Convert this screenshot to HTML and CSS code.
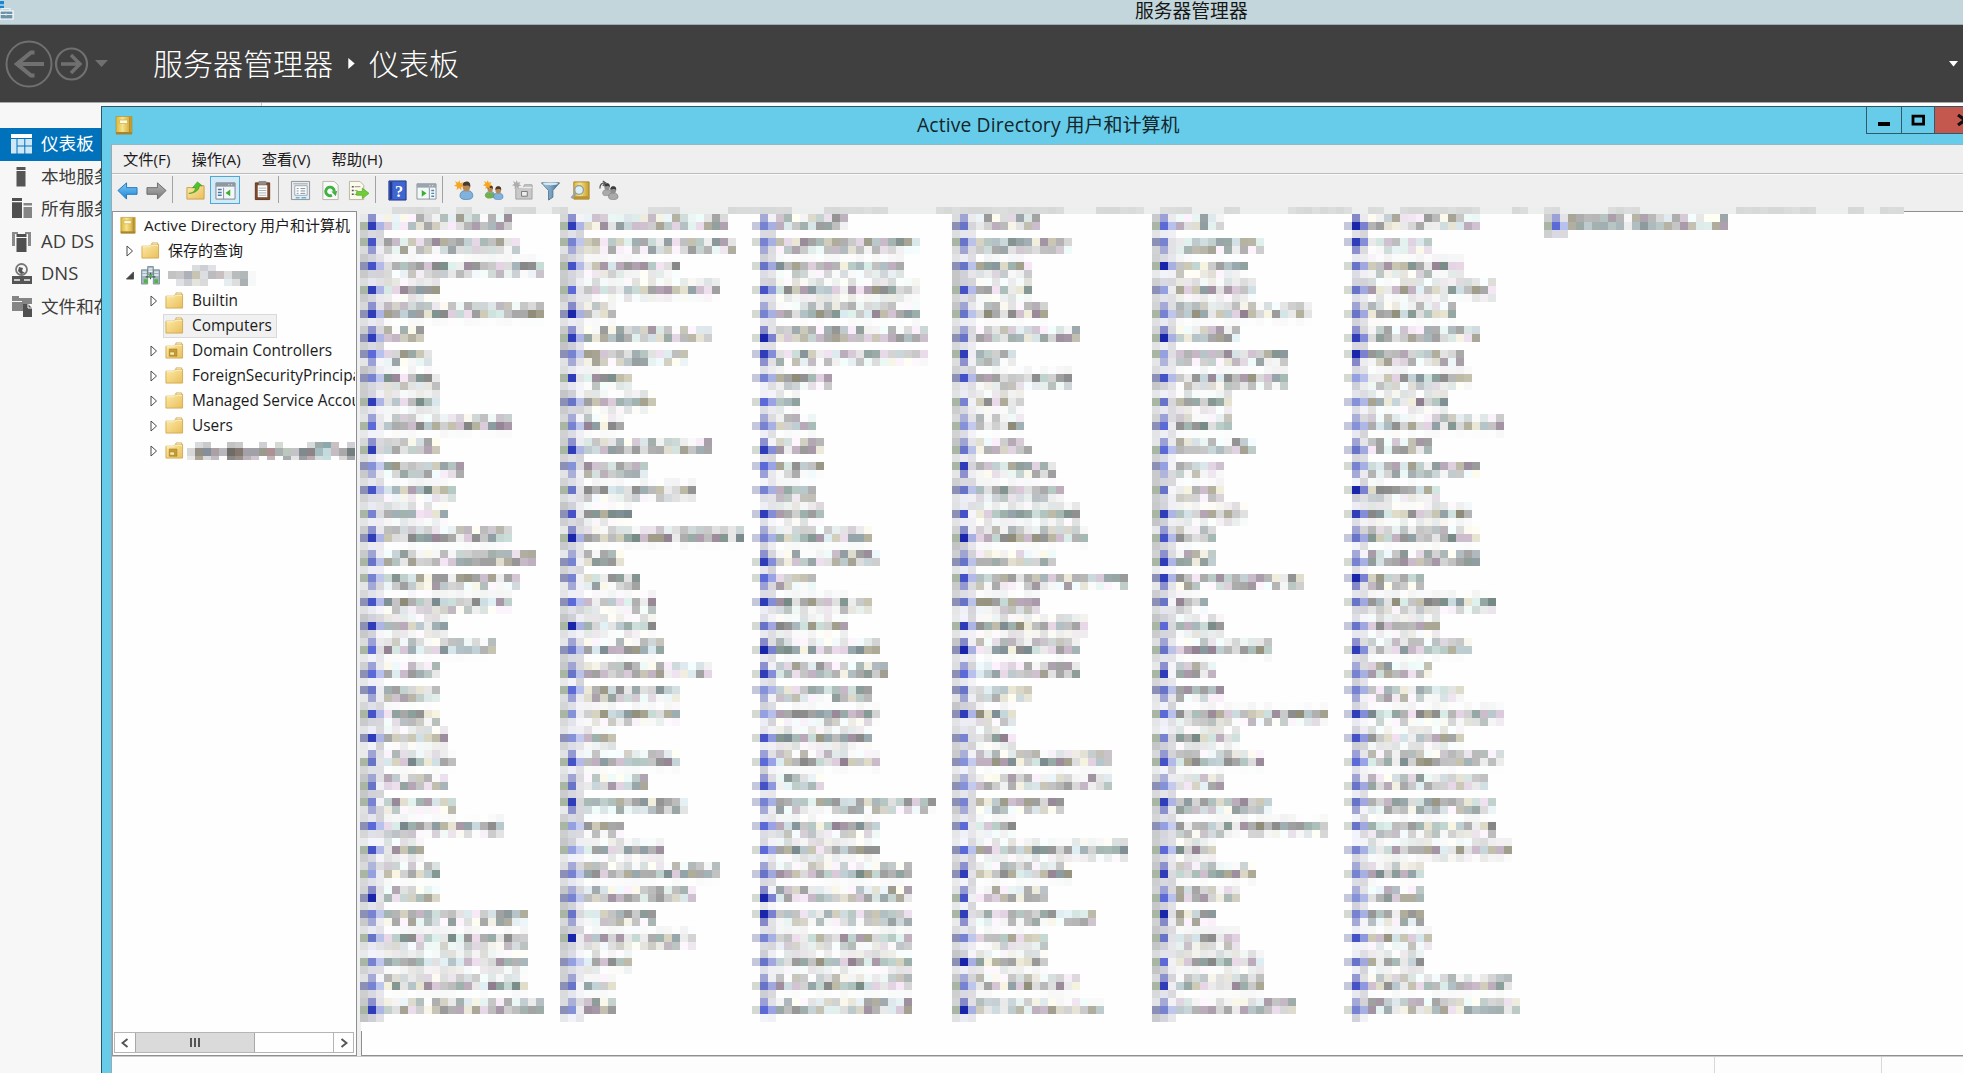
FILE: index.html
```html
<!DOCTYPE html>
<html lang="zh-CN">
<head>
<meta charset="utf-8">
<title>服务器管理器</title>
<link rel="stylesheet" href="styles.css">
</head>
<body>
<svg width="0" height="0" class="defs">
  <defs>
    <linearGradient id="gold" x1="0" y1="0" x2="1" y2="1"><stop offset="0" stop-color="#fdeaa6"/><stop offset="1" stop-color="#e9bf5c"/></linearGradient>
    <linearGradient id="book" x1="0" y1="0" x2="1" y2="0"><stop offset="0" stop-color="#d9b63c"/><stop offset=".4" stop-color="#f6e38a"/><stop offset="1" stop-color="#c79b2a"/></linearGradient>
    <linearGradient id="blue" x1="0" y1="0" x2="0" y2="1"><stop offset="0" stop-color="#7cc8f5"/><stop offset="1" stop-color="#1f86d8"/></linearGradient>
    <linearGradient id="grey" x1="0" y1="0" x2="0" y2="1"><stop offset="0" stop-color="#b5b5b5"/><stop offset="1" stop-color="#7a7a7a"/></linearGradient>
    <linearGradient id="fun" x1="0" y1="0" x2="1" y2="0"><stop offset="0" stop-color="#a8cbe2"/><stop offset=".5" stop-color="#7ba4c2"/><stop offset="1" stop-color="#3d6a90"/></linearGradient>
    <symbol id="i-book" viewBox="0 0 20 20"><path d="M2 1h16v17H2z" fill="url(#book)" stroke="#b08d2c" stroke-width=".6"/><path d="M2 16.500h16v2.500H2z" fill="#a8842a"/><path d="M5.500 4.500h8v3.500h-8z" fill="#fffbe0" stroke="#cfae44" stroke-width=".7"/><path d="M15.800 1.500v15" stroke="#a9852b" stroke-width="1"/></symbol>
    <symbol id="i-folder" viewBox="0 0 20 18"><path d="M1 4.500h8l2-2h7.500V17H1z" fill="url(#gold)" stroke="#cfa64a" stroke-width=".9"/><path d="M11.500 1h6v2h-6z" fill="#fff3c8" stroke="#c9a24a" stroke-width=".8"/><path d="M1.500 5h7.600l2-1.500H18" fill="none" stroke="#fff5cf" stroke-width="1"/></symbol>
    <symbol id="i-ou" viewBox="0 0 20 18"><use href="#i-folder"/><path d="M4.500 7.500h8v7.500h-8z" fill="#c89c34" stroke="#9a7826" stroke-width=".6"/><path d="M5 10.500h5v3.500H5z" fill="#fbe9a0" stroke="#9a7826" stroke-width=".6"/></symbol>
    <symbol id="i-domain" viewBox="0 0 20 20"><g fill="#a3b4bf" stroke="#6d808c" stroke-width=".8"><path d="M7 .500h6v9H7zM.500 4H7v15H.500zM13 4h6.500v15H13z"/></g><path d="M8 3h4M8 5.500h4M1.500 6.500h4.500M1.500 9.500h4.500M14 6.500h4.500M14 9.500h4.500" stroke="#eef5f8" stroke-width="1.400"/><path d="M5 11.500h10M10 7v7" stroke="#3d5260" stroke-width="1.200"/><path d="M3 14h4v4H3zM14 14h4v4h-4zM8.500 9h3v3h-3z" fill="#4fb83c"/></symbol>
    <symbol id="i-user" viewBox="0 0 14 18"><path d="M1 14c0-4 3-5 6-5s6 1 6 5c0 3-3 3.500-6 3.500S1 17 1 14z" fill="#7fb2dd" stroke="#4d7fac" stroke-width=".7"/><ellipse cx="7" cy="5.500" rx="3.600" ry="4.500" fill="#b98857"/><path d="M3.400 5C3 1 6 .5 7.500.500S11.500 2 10.500 6C10 3.500 6 4 3.400 5z" fill="#4a3a2c"/></symbol>
    <symbol id="i-star" viewBox="0 0 10 10"><path d="M5 0l1 3 3-1-1.500 2.500L10 6 7 6.600 7 10 5 7.500 2.500 9.500 3 6.500 0 5.500 2.500 4 1 1l3 1.500z" fill="#f5a623"/></symbol>
  </defs>
</svg>

<div class="screen">
  <div class="manager-title">
    <svg class="manager-icon" width="15" height="20" viewBox="0 0 15 20"><path d="M0 1h4v7H0z" fill="#1c86d1"/><path d="M0 5h4" stroke="#fff"/><path d="M0 11h13v8H0z" fill="#6d93a8" stroke="#fff" stroke-width="1.200"/><path d="M2 11V8.500h8V11M0 14.500h13M6 13.500v2" fill="none" stroke="#e9f1f4" stroke-width="1.200"/></svg>
    <span class="manager-name">服务器管理器</span>
  </div>
  <header class="manager-head">
    <svg class="head-nav" width="112" height="50" viewBox="0 0 112 50" fill="none" stroke="#707070">
      <circle cx="29" cy="25" r="22.500" stroke-width="2"/><path d="M44 25H18M34.500 13.500h-3.500L17 25l14 11.500h3.500" stroke-width="4.200"/>
      <circle cx="71.500" cy="25" r="15.500" stroke-width="2.200"/><path d="M61 25h18M71 16l9 9-9 9" stroke-width="3.400"/>
      <path d="M95 21h13l-6.500 7z" fill="#707070" stroke="none"/>
    </svg>
    <h1 class="crumbs"><span>服务器管理器</span><svg class="crumb-arrow" width="7" height="11" viewBox="0 0 7 12"><path d="M0 0l7 6-7 6z" fill="#fff"/></svg><span>仪表板</span></h1>
    <svg class="head-menu" width="9" height="6" viewBox="0 0 9 6"><path d="M0 0h9L4.500 5.500z" fill="#fff"/></svg>
  </header>
  <div class="manager-body">
    <nav class="side">
      <div class="side-item active"><svg width="22" height="22" viewBox="0 0 22 22" fill="#cfe6f5"><path fill="#fff" d="M0 1h21v4H0z"/><path d="M0 6h5.500v14.500H0zM6.500 6h6.800v6.500H6.500zM14.300 6H21v6.500h-6.700zM6.500 13.500h6.800v7H6.500zM14.300 13.500H21v7h-6.700z"/></svg><span>仪表板</span></div>
      <div class="side-item"><svg width="22" height="22" viewBox="0 0 22 22" fill="#555"><path d="M5.500 1h9v3h-9zM5.500 5h9v15.500h-9z"/></svg><span>本地服务器</span></div>
      <div class="side-item"><svg width="22" height="22" viewBox="0 0 22 22" fill="#505050"><path d="M1 0h10v3H1zM1 4.200h10V20H1z"/><path fill="#858585" d="M12.500 5h8.500v2.500h-8.500zM12.500 9H21v11h-8.500z"/></svg><span>所有服务器</span></div>
      <div class="side-item latin"><svg width="22" height="22" viewBox="0 0 22 22" fill="#505050"><path fill="#8a8a8a" d="M1 1h6v2H4v12H1zM20 1h-6v2h3v12h3z"/><path d="M5.500 3h10v3h-10zM5.500 7h10v14h-10z"/></svg><span>AD DS</span></div>
      <div class="side-item latin"><svg width="22" height="22" viewBox="0 0 22 22" fill="#555"><circle cx="10.500" cy="6.500" r="5.500" fill="none" stroke="#777" stroke-width="1.800"/><path d="M8 4l4 1-1 3 3 2-4 1-3-3z"/><path d="M1 13h20v8H1z"/><path d="M3 17h6M13 17h6" stroke="#eee" stroke-width="1.600"/></svg><span>DNS</span></div>
      <div class="side-item"><svg width="22" height="22" viewBox="0 0 22 22" fill="#858585"><path d="M1 0h7v2h4v3H1zM1 6h11v9H1z" /><path d="M11 2h10v6H11z"/><path fill="#505050" d="M12 8h5l4 4v9h-9z"/><path d="M17 8v4h4" fill="none" stroke="#f7f7f7"/></svg><span>文件和存储服务</span></div>
    </nav>
    <div class="manager-main"></div>
  </div>

  <section class="window">
    <div class="caption">
      <svg class="caption-icon" width="20" height="21"><use href="#i-book"/></svg>
      <span class="caption-text"><i>Active Directory</i> 用户和计算机</span>
      <div class="caption-buttons">
        <b class="min"><svg width="14" height="12" viewBox="0 0 14 12"><path d="M1 8h12v4H1z"/></svg></b>
        <b class="max"><svg width="14" height="12" viewBox="0 0 14 12"><path d="M2 2.200h10.600v8H2z" fill="none" stroke="#000" stroke-width="2.800"/></svg></b>
        <b class="close"><svg width="16" height="12" viewBox="0 0 16 12"><path d="M1 1l14 10M15 1L1 11" stroke="#111" stroke-width="3.200"/></svg></b>
      </div>
    </div>
    <div class="client">
      <div class="menu"><span>文件(F)</span><span>操作(A)</span><span>查看(V)</span><span>帮助(H)</span></div>
      <div class="toolbar">
        <svg viewBox="0 0 22 22"><path d="M1 11L10 3v5h11v7H10v5z" fill="url(#blue)" stroke="#2376b8"/></svg>
        <svg viewBox="0 0 22 22"><path d="M21 11L12 3v5H1v7h11v5z" fill="url(#grey)" stroke="#6b6b6b"/></svg>
        <i class="sep"></i>
        <svg viewBox="0 0 22 22"><path d="M2 8h8l2-2h8v14H2z" fill="url(#gold)" stroke="#c9a04a"/><path d="M4 14c4 0 7-3 7-6H8l5-6 5 4h-3c0 5-5 8-11 8z" fill="#54c22f" stroke="#2f8f1a" stroke-width=".6"/></svg>
        <i class="pressed"><svg viewBox="0 0 22 22"><path d="M1 3h20v17H1z" fill="#f4f7f9" stroke="#77838d"/><path d="M1 3h20v4H1z" fill="#8c98a2"/><path d="M14 5h1M17 5h1" stroke="#fff"/><path d="M3 10h4M3 13h4M3 16h4" stroke="#4b7ba5" stroke-width="1.500"/><path d="M9 8v12" stroke="#8593a0"/><path d="M16 10v7l-5-3.500z" fill="#3bb02c"/></svg></i>
        <svg viewBox="0 0 22 22"><path d="M3.500 3h15v17.500h-15z" fill="#7c4a2b" stroke="#5d3620"/><path d="M6 5.500h10V18H6z" fill="#fbfbfb"/><path d="M7 1h8v4H7z" fill="#8d8d8d"/><path d="M7 8.500h8M7 11h8M7 13.500h8M7 16h8" stroke="#a9b1b8"/></svg>
        <i class="sep"></i>
        <svg viewBox="0 0 22 22"><path d="M1.500 1.500h19v19h-19z" fill="#e9ecee" stroke="#8b9196"/><path d="M3.500 4h15" stroke="#9aa3aa"/><path d="M5 6h13v10H5z" fill="#fff" stroke="#9aa5ae"/><path d="M7 9h2M11 9h5M7 11.500h2M11 11.500h5M7 14h2M11 14h5" stroke="#7d8d99"/><path d="M6 18.500h4M12 18.500h5" stroke="#58b9dd" stroke-width="1.500"/></svg>
        <svg viewBox="0 0 22 22"><path d="M3 1.500h12l4 4v15H3z" fill="#fafafa" stroke="#b5b5a8"/><path d="M15 12a4.500 4.500 0 1 0-2.500 4" fill="none" stroke="#3fb13f" stroke-width="3"/><path d="M18 11.500l-6 .5 4.500 5z" fill="#3fb13f"/></svg>
        <svg viewBox="0 0 22 22"><path d="M1.500 1.500h11l4 4v15h-15z" fill="#fcfaea" stroke="#b5b5a0"/><path d="M4 7h2M4 11h2M4 15h2" stroke="#555" stroke-width="1.500"/><path d="M7 7h6M7 11h3M7 15h3" stroke="#a8a890" stroke-width="1.300"/><path d="M9 12h6V8.500l7 5.500-7 5.500V16H9z" fill="#6fce36" stroke="#4da71f" stroke-width=".7"/></svg>
        <i class="sep"></i>
        <svg viewBox="0 0 22 22"><path d="M2 1h18v20H2z" fill="#3f66d0" stroke="#1f3483"/><path d="M3 2h2.500v18H3z" fill="#22378f"/><text x="12.500" y="17.500" text-anchor="middle" class="help">?</text></svg>
        <svg viewBox="0 0 22 22"><path d="M1 4h20v16H1z" fill="#f4f7f9" stroke="#8a949b"/><path d="M1 4h20v4H1z" fill="#9aa4ac"/><path d="M14 6h1M17 6h1" stroke="#fff"/><path d="M14 8v12" stroke="#8593a0"/><path d="M16 11h3M16 14h3M16 17h3" stroke="#5485b0" stroke-width="1.400"/><path d="M6 10.500v7l5-3.500z" fill="#3bb02c"/></svg>
        <i class="sep"></i>
        <svg viewBox="0 0 22 22"><use href="#i-user" x="5" y="1" width="16" height="20"/><use href="#i-star" x="0" y="0" width="11" height="11"/></svg>
        <svg viewBox="0 0 22 22"><use href="#i-user" x="2" y="5" width="11" height="14"/><path d="M2 16c0-2 2-3 5-3s5 1 5 3-2 3.500-5 3.500S2 18.500 2 16z" fill="#74b04a"/><use href="#i-user" x="10" y="6" width="12" height="15"/><use href="#i-star" x="0" y="0" width="10" height="10"/></svg>
        <svg viewBox="0 0 22 22"><path d="M4 8h8l1-3h8v15H4z" fill="#c9c9c9" stroke="#a2a2a2"/><path d="M4 8h17" stroke="#f2f2f2"/><path d="M10 12h6v5h-6z" fill="#eee" stroke="#777"/><use href="#i-star" x="0" y="0" width="10" height="10" class="mono"/></svg>
        <svg viewBox="0 0 22 22"><path d="M1.500 3h19l-7 8v7l-4.500 3V11z" fill="url(#fun)" stroke="#54788f"/><ellipse cx="11" cy="4" rx="8" ry="1.500" fill="#d8e8f2"/></svg>
        <svg viewBox="0 0 22 22"><path d="M4 2h16v18H4z" fill="url(#book)" stroke="#a9852b"/><path d="M4 17h16v3H4z" fill="#b8932f"/><circle cx="9.500" cy="10.500" r="4.500" fill="#dceef7" stroke="#8c9ba5" stroke-width="1.300"/><path d="M6 14l-4.500 5" stroke="#9aa3aa" stroke-width="2.400"/></svg>
        <svg viewBox="0 0 22 22" class="mono"><use href="#i-user" x="4" y="3" width="11" height="14"/><use href="#i-user" x="10" y="6" width="12" height="15"/><path d="M2 9c0-5 2-6 5-6M5 1l3 2-3 3" fill="none" stroke="#555" stroke-width="1.300"/></svg>
      </div>
      <div class="panes">
        <div class="tree">
          <div class="rows">
            <div class="row root"><svg class="ico" width="20" height="21"><use href="#i-book"/></svg><span><i>Active Directory</i> 用户和计算机</span></div>
            <div class="row l1"><svg class="tw" viewBox="0 0 8 12"><path d="M1 1l5.500 5L1 11z"/></svg><svg class="ico"><use href="#i-folder"/></svg><span class="cjk">保存的查询</span></div>
            <div class="row l1"><svg class="tw open" viewBox="0 0 9 10"><path d="M8.500 1v8H.500z"/></svg><svg class="ico"><use href="#i-domain"/></svg><canvas class="domain-name" width="88" height="21"></canvas></div>
            <div class="row l2"><svg class="tw" viewBox="0 0 8 12"><path d="M1 1l5.500 5L1 11z"/></svg><svg class="ico"><use href="#i-folder"/></svg><span>Builtin</span></div>
            <div class="row l2"><svg class="tw"></svg><div class="selected"><svg class="ico"><use href="#i-folder"/></svg><span>Computers</span></div></div>
            <div class="row l2"><svg class="tw" viewBox="0 0 8 12"><path d="M1 1l5.500 5L1 11z"/></svg><svg class="ico"><use href="#i-ou"/></svg><span>Domain Controllers</span></div>
            <div class="row l2"><svg class="tw" viewBox="0 0 8 12"><path d="M1 1l5.500 5L1 11z"/></svg><svg class="ico"><use href="#i-folder"/></svg><span>ForeignSecurityPrincipals</span></div>
            <div class="row l2"><svg class="tw" viewBox="0 0 8 12"><path d="M1 1l5.500 5L1 11z"/></svg><svg class="ico"><use href="#i-folder"/></svg><span>Managed Service Accounts</span></div>
            <div class="row l2"><svg class="tw" viewBox="0 0 8 12"><path d="M1 1l5.500 5L1 11z"/></svg><svg class="ico"><use href="#i-folder"/></svg><span>Users</span></div>
            <div class="row l2"><svg class="tw" viewBox="0 0 8 12"><path d="M1 1l5.500 5L1 11z"/></svg><svg class="ico"><use href="#i-ou"/></svg><canvas class="unit-name" width="169" height="18"></canvas></div>
          </div>
          <div class="hscroll">
            <b><svg width="8" height="10" viewBox="0 0 8 10"><path d="M6.500 1l-5 4 5 4"/></svg></b>
            <div class="thumb"><i></i><i></i><i></i></div>
            <div class="track"></div>
            <b><svg width="8" height="10" viewBox="0 0 8 10"><path d="M1.500 1l5 4-5 4"/></svg></b>
          </div>
        </div>
        <div class="list"><canvas class="mosaic" width="1544" height="824"></canvas></div>
      </div>
      <div class="status"><span></span><span></span><span></span></div>
    </div>
  </section>
</div>
<script src="mosaic.js"></script>
</body>
</html>
```
FILE: styles.css
```css
* { box-sizing: border-box; }
body { margin: 0; overflow: hidden; background: #f7f7f7; color: #1b1b1b; font-family: "Open Sans", "Noto Sans CJK SC", sans-serif; }
i, b { font-style: normal; font-weight: normal; }
svg { display: block; flex: none; }
.defs { position: absolute; }
.screen { position: relative; width: 1963px; height: 1073px; overflow: hidden; display: flex; flex-direction: column; }

.manager-title { height: 25px; flex: none; display: flex; align-items: flex-start; background: #c3d6dc; border-bottom: 1px solid #9fabae; }
.manager-name { margin-left: 1120px; font-size: 18.800px; line-height: 22px; white-space: nowrap; color: #161616; }
.manager-head { height: 78px; flex: none; display: flex; align-items: center; background: #404040; border-bottom: 1px solid #a9a9a9; }
.crumbs { display: flex; align-items: center; margin: 0 0 0 41px; font-size: 30px; line-height: 40px; font-weight: 300; color: #fff; white-space: nowrap; }
.crumb-arrow { margin: 0 14px 0 15px; }
.head-menu { margin: 0 5px 0 auto; }
.manager-body { flex: 1; display: flex; }
.side { width: 262px; padding-top: 25px; border-right: 1px solid #c8c8c8; background: #f7f7f7; }
.manager-main { flex: 1; background: #fff; }
.side-item { height: 32.500px; display: flex; align-items: center; padding-left: 11px; gap: 8px; font-size: 17.600px; color: #3c3c3c; white-space: nowrap; }
.side-item span { line-height: 28px; padding-bottom: 2px; }
.side-item.latin { font-size: 18.400px; }
.side-item.active { background: #0072bc; color: #fff; }

.window { position: absolute; left: 101px; top: 106px; width: 1900px; height: 1000px; padding-left: 9px; border: 1px solid #2c5666; background: #66cce9; display: flex; flex-direction: column; }
.caption { height: 37px; flex: none; display: flex; width: 1862px; }
.caption-icon { margin: 8px 0 0 3px; }
.caption-text { margin-left: 783px; font-size: 19px; line-height: 36px; white-space: pre; color: #14252b; }
.caption-text i { font-size: 19.300px; letter-spacing: .14px; }
.caption-buttons { display: flex; margin-left: auto; height: 27px; width: 107px; overflow: hidden; }
.caption-buttons b { flex: none; height: 27px; border: 1px solid #2f5a68; border-top: 0; margin-right: -1px; display: flex; align-items: center; justify-content: center; }
.min { width: 36px; }
.max { width: 34px; }
.close { width: 62px; background: #c5584e; }

.client { flex: 1; display: flex; flex-direction: column; background: #efefef; border-left: 1px solid #a0a8ab; border-top: 1px solid #8fb9c6; }
.menu { height: 29px; flex: none; display: flex; gap: 21px; padding-left: 11px; border-bottom: 1px solid #bcbcbc; font-size: 15.300px; line-height: 28px; white-space: nowrap; }
.toolbar { height: 37px; flex: none; border-top: 1px solid #fafafa; padding-left: 5px; display: grid; grid-template-columns: 29px 26px 13px 25px 42px 26px 12px 30px 28px 27px 12px 29px 26px 12px 29px 29px 28px 30px 28px 22px; align-items: start; }
.toolbar > svg { width: 21px; height: 21px; margin-top: 5px; }
.sep { width: 1px; height: 27px; background: #a2a2a2; margin-top: 1px; }
.pressed { width: 30px; height: 28px; margin-top: 1px; border: 1px solid #4aa9d6; background: #d3eaf6; display: grid; place-items: center; }
.pressed svg { width: 21px; height: 21px; }
.help { font: bold 17px "Liberation Serif", serif; fill: #fff; }
.mono { filter: grayscale(1); }

.panes { height: 845px; flex: none; display: flex; gap: 4px; }
.tree { width: 245px; background: #fefefe; border: 1px solid #8d9093; border-left-color: #9a9da0; display: flex; flex-direction: column; justify-content: space-between; overflow: hidden; }
.row { height: 25px; display: flex; align-items: center; font-size: 15.400px; white-space: nowrap; width: 242px; overflow: hidden; }
.rows { padding-top: 1px; }
.row span { line-height: 25px; }
.row .cjk { font-size: 15px; }
.row canvas { flex: none; }
.root { padding-left: 6px; font-size: 15px; }
.root i { font-size: 15.300px; }
.root span { margin-left: 7px; }
.l1 { padding-left: 13px; }
.l2 { padding-left: 37px; }
.tw { width: 8px; height: 12px; fill: #fff; stroke: #4a4a4a; stroke-width: 1; }
.tw.open { fill: #444; height: 9px; }
.ico { width: 19px; height: 19px; margin-left: 7px; }
.l1 span, .l1 canvas { margin-left: 8px; }
.l2 span { margin-left: 8px; }
.l2 canvas { margin-left: 3px; }
.root .ico { margin-left: 0; height: 21px; width: 18px; }
.selected { display: flex; align-items: center; height: 24px; margin-left: 5px; padding: 0 4px 0 1px; border: 1px solid #d9d9d9; background: #f1f1f1; }
.selected .ico { margin-left: 0; }
.hscroll { display: flex; height: 21px; margin: 0 2px 2px 1px; border: 1px solid #b5b5b5; }
.hscroll b { width: 20px; display: grid; place-items: center; }
.hscroll b svg { fill: none; stroke: #555; stroke-width: 2; }
.hscroll b:last-child { border-left: 1px solid #b5b5b5; }
.thumb { width: 120px; background: #dadada; border: solid #a8a8a8; border-width: 0 1px; display: flex; align-items: center; justify-content: center; gap: 2px; }
.thumb i { width: 2px; height: 9px; background: #555; }
.track { flex: 1; }
.list { position: relative; flex: 1; background: #fefefe; border: 1px solid #8d9093; }
.mosaic { position: absolute; left: -2px; top: -5px; display: block; }
.status { flex: 1; display: flex; background: #fdfdfd; border-top: 1px solid #c9cccc; }
.status span { flex: none; border-right: 1px solid #d8d8d8; width: 167px; }
.status span:first-child { width: 1603px; }
```
FILE: mosaic.js
```js
// Each list column: first cell, entry widths in cells, and icon darkness per entry.
const columns = [
  { at: 0, blue: 1, wide: 0,
    ends: [19,20,23,10,23,8,9,10,10,19,10,13,12,11,19,22,20,19,11,17,10,10,10,11,12,11,12,18,8,10,10,21,21,21,21,23],
    tone: "877888648683748547866578554672945448" },
  { at: 25, blue: 1, wide: 0,
    ends: [21,22,15,20,7,19,16,9,12,8,19,11,17,9,23,8,10,12,12,13,19,15,15,7,15,11,16,8,13,20,17,12,17,9,7,7],
    tone: "847698485483579446955633758224459253" },
  { at: 50, blue: 0, wide: 1,
    ends: [11,20,18,20,20,21,21,9,5,7,8,8,7,8,14,15,7,14,11,15,16,14,15,14,15,8,22,15,15,19,19,19,19,19,19,19],
    tone: "445749846486484868598327674665994556" },
  { at: 74, blue: 1, wide: 0,
    ends: [11,15,10,10,12,16,8,15,9,9,10,13,14,16,17,13,22,11,17,16,16,10,8,8,20,20,14,8,22,15,12,18,12,12,16,19],
    tone: "555755874358579575896584334668784949" },
  { at: 99, blue: 1, wide: 0,
    ends: [9,14,12,13,20,11,17,17,10,10,13,9,9,12,8,8,19,7,9,15,8,9,22,11,14,9,15,22,8,13,11,8,11,14,14,18],
    tone: "649249275662587885658564738268695684" },
  { at: 124, blue: 0, wide: 1,
    ends: [16,10,14,18,13,16,14,15,12,19,10,16,11,15,16,16,9,18,11,15,10,14,19,14,19,17,18,18,20,9,9,9,10,9,20,21],
    tone: "985558923354985495584487655544347574" },
  { at: 148, blue: 1, wide: 0, ends: [23], tone: "6" }
];
const CELL = 8;

function noise(x, y, k) {
  let h = (x * 374761393 + y * 668265263 + k * 2246822519) | 0;
  h = Math.imul(h ^ (h >>> 13), 1274126177);
  h = Math.imul(h ^ (h >>> 15), 2246822519);
  return ((h ^ (h >>> 16)) >>> 0) / 4294967296;
}
function mix(a, b, t) { return a.map((v, i) => Math.round(v + (b[i] - v) * t)); }
const rgb = c => `rgb(${c.join(",")})`;
const PAPER = [254, 254, 254];

const ctx = document.querySelector(".mosaic").getContext("2d");
function cell(x, y, c) {
  ctx.fillStyle = rgb(c);
  ctx.fillRect(x * CELL, 7 + y * CELL, CELL, CELL);
}

ctx.fillStyle = rgb(PAPER);
ctx.fillRect(1, 7, 1543, 817);
for (let x = 0; x < 193; x++) {
  const v = x > 2 && noise(x >> 1, 3, 9) > .45 ? 214 + Math.floor(noise(x, 1, 2) * 8) : 237;
  ctx.fillStyle = rgb([v, v + 1, v + 1]);
  ctx.fillRect(x * CELL, 0, CELL, 7);
}

const tints = [[0, 0, 0], [10, 6, -12], [-14, 4, 0], [8, -8, 8], [-12, 3, 8], [0, 0, 0]];
for (const col of columns) {
  col.ends.forEach((end, i) => {
    const center = 1 + 2.8 * i;
    const main = Math.floor(center);
    for (let y = Math.max(0, main - 1); y <= Math.min(100, main + 1); y++) {
      const cover = Math.max(0, Math.min(y + 1, center + .85) - Math.max(y, center - .7));
      for (let x = col.blue + 2; x < end; x++) {
        const n = noise(x + col.at, y, 1);
        let ink = cover * (.06 + .42 * n);
        if (cover < .8 && noise(x + col.at, y, 5) < .3) ink *= .15;
        else if (cover > .4 && cover < .8) ink *= 1.25;
        const t = tints[Math.floor(noise(x + col.at, y, 4) * 6)];
        cell(col.at + x, y, mix(PAPER, [0, 0, 0], ink).map((v, k) => Math.min(254, v + t[k] * cover)));
      }
    }
    const d = +col.tone[i];
    const deep = d > 5 ? mix([112, 128, 228], [26, 38, 170], (d - 5) / 4) : mix([178, 190, 240], [104, 116, 200], d / 5);
    const bx = col.at + col.blue;
    for (let y = Math.max(0, main - 1); y <= Math.min(100, main + 1); y++) {
      const g = 205 + Math.floor(noise(bx, y, 7) * 40);
      if (y !== main) {
        cell(bx, y, [g, g, g + 8]);
        if (!col.wide) cell(bx - 1, y, [g - 12, g - 10, g - 8]);
      }
      const r = 210 + Math.floor(noise(bx, y, 8) * 36);
      cell(bx + 1, y, [r, r, r + 5]);
    }
    cell(bx, main, deep);
    const part = center - main;
    if (part > .7 && main < 100) cell(bx, main + 1, mix(deep, [190, 190, 215], .65));
    if (part < .3 && main > 0) cell(bx, main - 1, mix(deep, [190, 190, 215], .65));
    if (noise(bx, main, 2) > .4 || col.wide) cell(bx + 1, main, mix(deep, [215, 220, 245], col.wide ? .5 : .75));
    const edge = noise(bx, main, 3) > .4 ? [170, 182, 164] : [140, 143, 182];
    cell(bx - 1, main, col.wide ? mix(edge, PAPER, .5) : edge);
  });
}

// Short pixelated labels in the tree.
function label(selector, tops, rows) {
  const c = document.querySelector(selector).getContext("2d");
  rows.forEach((row, y) => row.forEach((v, x) => {
    if (!v) return;
    c.fillStyle = "#" + v;
    c.fillRect(x * CELL, tops[y], CELL, tops[y + 1] - tops[y]);
  }));
}
label(".domain-name", [0, 6, 14, 21], [
  [0, 0, 0, "d9dde0", "cccfd6", "dfe1e6", 0, 0, 0, 0, 0],
  ["c3c3c3", "c8c8c8", "aeb0ba", "c8c4b4", "dcdee2", "bcbcc0", "c8bfc0", "dedede", "b8bcbd", "b2b7b8", "f8f8f8"],
  [0, "e0e1e5", "cbced2", "e4e4df", "dadada", 0, 0, "e5edf0", "dddddd", "abb0b3", "f5f8f8"]
]);
label(".unit-name", [0, 6, 14, 18], [
  [0, "d9dadd", "c9cacb", 0, 0, "c2c2c2", "c9c9cb", 0, 0, "cfd0d4", 0, "d5dad4", 0, 0, 0, "d6dada", "9dabab", "8caaad", "c8c0c2", 0, "d0cfd5"],
  ["d7d7d7", "938e83", "858f9a", "aaa1a4", "b8b7bd", "6f6b67", "84776f", "a3a0a7", "a1a1a9", "9b9b8d", "af9195", "a8b0af", "bcc7bd", "c3c3c8", "7f8a8e", "8e8386", "a3bdc0", "c5dadd", "c4bcc0", "aaa9a9", "747e7e"],
  ["e8e8e8", "aba694", "d9d9d9", "c2bdc4", 0, "898787", "99908a", "bab3ba", "d1c7cc", 0, "c2b8ba", 0, "a8acb1", "e4e4e4", "9c9ea4", "b9adb0", "d5dede", "c8dfe2", 0, "d9d7d7", "a3a9aa"]
]);
```
